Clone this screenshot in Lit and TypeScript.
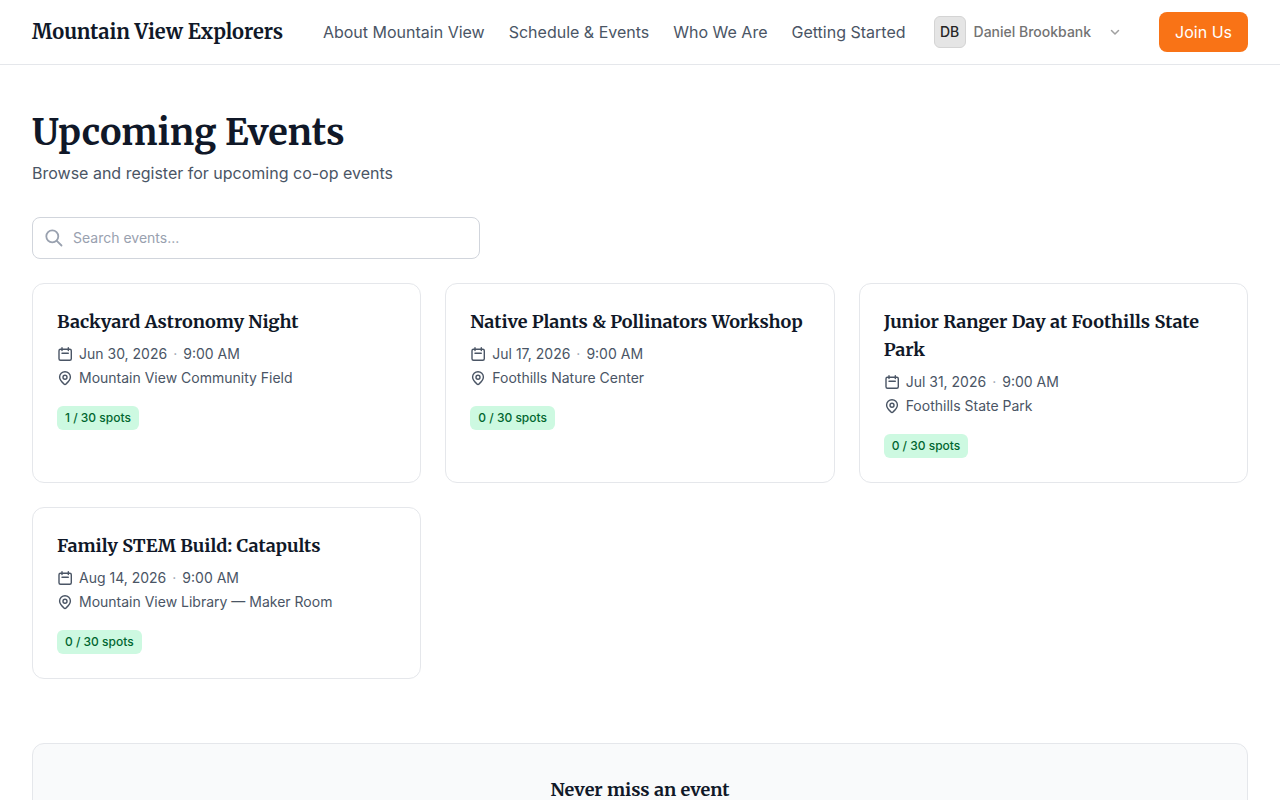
import { LitElement, html, css } from "lit";
import { customElement, state } from "lit/decorators.js";

interface CoopEvent {
  title: string;
  date: string;
  time: string;
  place: string;
  taken: number;
  total: number;
}

const links = ["About Mountain View", "Schedule & Events", "Who We Are", "Getting Started"];

const events: CoopEvent[] = [
  { title: "Backyard Astronomy Night", date: "Jun 30, 2026", time: "9:00 AM", place: "Mountain View Community Field", taken: 1, total: 30 },
  { title: "Native Plants & Pollinators Workshop", date: "Jul 17, 2026", time: "9:00 AM", place: "Foothills Nature Center", taken: 0, total: 30 },
  { title: "Junior Ranger Day at Foothills State Park", date: "Jul 31, 2026", time: "9:00 AM", place: "Foothills State Park", taken: 0, total: 30 },
  { title: "Family STEM Build: Catapults", date: "Aug 14, 2026", time: "9:00 AM", place: "Mountain View Library — Maker Room", taken: 0, total: 30 },
];

const calendarIcon = html`<svg class="icon" viewBox="0 0 16 16" aria-hidden="true">
  <rect x="2" y="3.2" width="12.3" height="11.1" rx="1.5" />
  <path d="M5 1.8v2.800M11.300 1.800v2.800M5 7.200h6.300" />
</svg>`;

const pinIcon = html`<svg class="icon" viewBox="0 0 16 16" aria-hidden="true">
  <path d="M13.400 7.100c0 2.800-2 4.800-4.300 6.800a1.600 1.600 0 0 1-2.200 0c-2.300-2-4.300-4-4.300-6.800a5.400 5.400 0 0 1 10.800 0Z" />
  <circle cx="8" cy="7.300" r="2" />
</svg>`;

@customElement("app-root")
export class AppRoot extends LitElement {
  @state() private query = "";

  static styles = css`
    :host {
      display: block;
      min-height: 100vh;
      background: #fff;
      color: #4a5565;
      font: 16px/24px Inter, sans-serif;
    }
    * { box-sizing: border-box; }
    h1, h2, p { margin: 0; }
    a { color: inherit; text-decoration: none; }
    svg {
      flex: none;
      fill: none;
      stroke: currentColor;
      stroke-linecap: round;
      stroke-linejoin: round;
    }
    .bar {
      display: flex;
      align-items: center;
      justify-content: space-between;
      padding: 12px 32px;
      border-bottom: 1px solid #e5e7eb;
    }
    .brand, h1, h2 {
      font-family: Merriweather, "Noto Serif", serif;
      font-weight: 700;
      color: #101828;
    }
    .brand { font-size: 20px; line-height: 28px; white-space: nowrap; }
    .nav { display: flex; align-items: center; gap: 24px; white-space: nowrap; }
    .user {
      display: flex;
      align-items: center;
      gap: 8px;
      padding: 0 12px 0 4px;
      border: 0;
      background: none;
      color: #737373;
      font: 500 14px/20px Inter, sans-serif;
    }
    .avatar {
      display: grid;
      place-items: center;
      width: 32px;
      height: 32px;
      border: 1px solid #d4d4d4;
      border-radius: 6px;
      background: #e5e5e5;
      color: #262626;
    }
    .chevron { width: 16px; height: 16px; margin-left: 8px; color: #a1a1a1; stroke-width: 1.5; }
    .join { padding: 8px 16px; border-radius: 8px; background: #f97316; color: #fff; }
    .page { padding: 48px 32px; }
    h1 { font-size: 36px; line-height: 40px; }
    .lead { margin-top: 8px; }
    .search { position: relative; max-width: 448px; margin: 32px 0 24px; }
    .search svg {
      position: absolute;
      left: 12px;
      top: 11px;
      width: 20px;
      height: 20px;
      color: #99a1af;
      stroke-width: 1.8;
    }
    .search input {
      display: block;
      width: 100%;
      padding: 10px 16px 10px 40px;
      border: 1px solid #d1d5dc;
      border-radius: 8px;
      background: #fff;
      color: #101828;
      font: 14px/20px Inter, sans-serif;
    }
    .search input::placeholder { color: #99a1af; opacity: 1; }
    .grid { display: grid; grid-template-columns: repeat(3, minmax(0, 1fr)); gap: 24px; }
    .card { padding: 24px; border: 1px solid #e5e7eb; border-radius: 12px; }
    h2 { font-size: 18px; line-height: 28px; }
    .facts { display: grid; gap: 4px; margin: 8px 0 18px; font-size: 14px; line-height: 20px; }
    .row { display: flex; align-items: center; gap: 6px; }
    .dot { color: #99a1af; }
    .icon { width: 16px; height: 16px; stroke-width: 1.4; }
    .spots {
      width: fit-content;
      padding: 4px 8px;
      border-radius: 6px;
      background: #cdf9e1;
      color: #016630;
      font: 500 12px/16px Inter, sans-serif;
    }
    .news {
      margin-top: 64px;
      padding: 32px;
      border: 1px solid #e5e7eb;
      border-radius: 12px;
      background: #f9fafb;
      text-align: center;
    }
  `;

  private card(e: CoopEvent) {
    return html`<article class="card">
      <h2>${e.title}</h2>
      <div class="facts">
        <p class="row">${calendarIcon}<span>${e.date}</span><span class="dot">·</span><span>${e.time}</span></p>
        <p class="row">${pinIcon}<span>${e.place}</span></p>
      </div>
      <p class="spots">${e.taken} / ${e.total} spots</p>
    </article>`;
  }

  render() {
    const q = this.query.trim().toLowerCase();
    const shown = events.filter((e) => e.title.toLowerCase().includes(q));
    return html`
      <header class="bar">
        <a class="brand" href="#">Mountain View Explorers</a>
        <nav class="nav">
          ${links.map((l) => html`<a href="#">${l}</a>`)}
          <button class="user" type="button">
            <span class="avatar">DB</span>
            <span>Daniel Brookbank</span>
            <svg class="chevron" viewBox="0 0 16 16" aria-hidden="true"><path d="m4.500 6.500 3.500 3.500 3.500-3.500" /></svg>
          </button>
          <a class="join" href="#">Join Us</a>
        </nav>
      </header>
      <main class="page">
        <h1>Upcoming Events</h1>
        <p class="lead">Browse and register for upcoming co-op events</p>
        <div class="search">
          <svg viewBox="0 0 20 20" aria-hidden="true"><circle cx="8.300" cy="8.300" r="6" /><path d="m12.800 12.800 4.700 4.700" /></svg>
          <input
            type="search"
            aria-label="Search events"
            placeholder="Search events..."
            .value=${this.query}
            @input=${(ev: InputEvent) => (this.query = (ev.target as HTMLInputElement).value)}
          />
        </div>
        <section class="grid">${shown.map((e) => this.card(e))}</section>
        <section class="news"><h2>Never miss an event</h2></section>
      </main>
    `;
  }
}
